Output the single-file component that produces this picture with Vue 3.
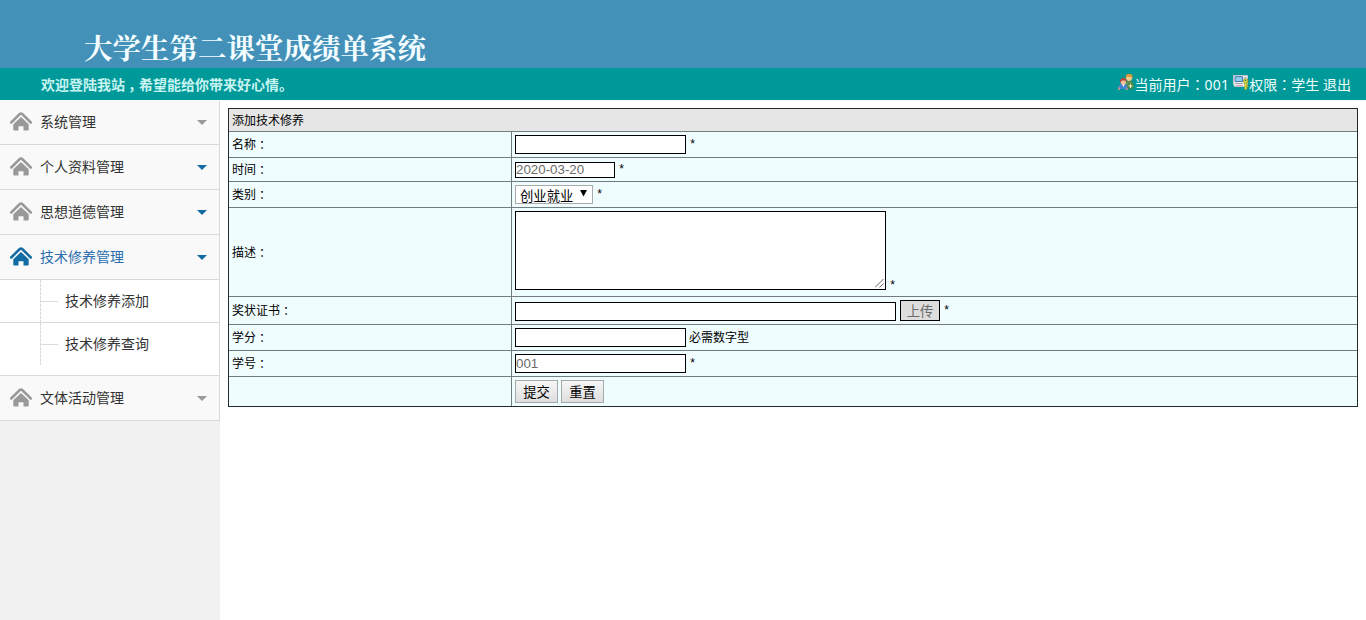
<script setup>
import { ref } from 'vue'

const menus = [
  { name: '系统管理', state: 'idle' },
  { name: '个人资料管理', state: 'ready' },
  { name: '思想道德管理', state: 'ready' },
  { name: '技术修养管理', state: 'active', children: ['技术修养添加', '技术修养查询'] },
  { name: '文体活动管理', state: 'idle' },
]
const category = ref('创业就业')
</script>

<template>
  <div class="page">
    <header class="banner"><h1>大学生第二课堂成绩单系统</h1></header>
    <div class="bar">
      <span class="welcome">欢迎登陆我站<span class="comma">，</span>希望能给你带来好心情。</span>
      <div class="user">
        <svg class="people" width="16" height="17" viewBox="0 0 16 17">
          <path d="M7 14V10q0-3 3-3h2q3 0 3 3v4z" fill="#5d9a55" stroke="#3d7144" stroke-width=".6" />
          <circle cx="11" cy="4" r="3" fill="#f6cc91" />
          <path d="M7.800 4.500V1.500L9.500 0h3.500l1.500 1.500v3L13 3H9z" fill="#e09a3c" />
          <path d="M0 15q0-5 4-5h2q4 0 4 5z" fill="#4383d1" />
          <path d="M4 10l1.300 3L7 10z" fill="#fff" />
          <circle cx="5.300" cy="8" r="2.700" fill="#f6c09b" />
          <path d="M2 9V6.500q1.500-3.500 4-2.500 3 0 2.500 4L7 6.500H4z" fill="#b3483a" />
          <path d="M0 16l1-4 1 4zM8 16l.5-3 1.500 3z" fill="#e0a070" />
          <circle cx="12.500" cy="12" r="3" fill="#52863f" />
          <path d="M12.500 10v4M10.500 12h4" stroke="#e8f5d6" />
        </svg>
        <span class="txt">当前用户<span class="mid">：</span><span class="num">001</span></span>
        <svg class="device" width="16" height="16" viewBox="0 0 16 16">
          <path d="M.5 1.500h14v8l-1 3h-12l-1-3z" fill="#eeeef2" stroke="#c2c7cf" />
          <path d="M2 2.700h7.500v4.800H2z" fill="#8ccdf0" stroke="#427fae" />
          <path d="M11 3.500h2M11 5.500h2M2 9.500h8" stroke="#a0a8b2" />
          <path d="M3 11.500h7" stroke="#d6a9b4" stroke-width="1.200" />
          <circle cx="12.700" cy="7" r="2.300" fill="#f0e248" stroke="#7d8f27" stroke-width=".8" />
          <path d="M11.700 9h2v6.500h-2zM13.700 11H15v2h-1.300z" fill="#f0e63e" stroke="#8b9a31" stroke-width=".6" />
          <circle cx="12.700" cy="6.500" r=".8" fill="#317253" />
        </svg>
        <span class="txt">权限<span class="mid">：</span>学生 退出</span>
      </div>
    </div>
    <div class="body">
      <nav class="side">
        <template v-for="m in menus" :key="m.name">
          <div class="item" :class="m.state">
            <svg class="home" width="22" height="19" viewBox="0 0 22 19">
              <path d="M1.200 10.500L9.800 2q1.200-1 2.400 0l8.600 8.500" fill="none" stroke="currentColor" stroke-width="2.500" stroke-linecap="round" />
              <path d="M3.300 12.200L11 5l7.700 7.200v5.300q0 1-1 1h-4.200v-4.200h-5v4.200H4.300q-1 0-1-1z" fill="currentColor" />
            </svg>
            <span class="label">{{ m.name }}</span>
            <i class="caret"></i>
          </div>
          <div v-if="m.children" class="sub">
            <div v-for="c in m.children" :key="c" class="leaf"><i class="branch"></i>{{ c }}</div>
          </div>
        </template>
      </nav>
      <main class="main">
        <div class="form">
          <div class="row title">添加技术修养</div>
          <div class="row r-name">
            <div class="key">名称<span class="mid">：</span></div>
            <div class="val"><input class="field" type="text"><span class="star">*</span></div>
          </div>
          <div class="row r-date">
            <div class="key">时间<span class="mid">：</span></div>
            <div class="val"><input class="field date" type="text" value="2020-03-20"><span class="star">*</span></div>
          </div>
          <div class="row r-type">
            <div class="key">类别<span class="mid">：</span></div>
            <div class="val">
              <div class="select"><span>{{ category }}</span><svg width="7" height="7" viewBox="0 0 7 7"><path d="M0 0h7L3.500 6.500z" /></svg></div>
              <span class="star">*</span>
            </div>
          </div>
          <div class="row r-desc">
            <div class="key">描述<span class="mid">：</span></div>
            <div class="val">
              <div class="area">
                <textarea></textarea>
                <svg class="grip" width="9" height="9" viewBox="0 0 9 9"><path d="M0 8.500L8.500 0M4.500 8.500L8.500 4.500" stroke="#666" fill="none" /></svg>
              </div>
              <span class="star low">*</span>
            </div>
          </div>
          <div class="row r-cert">
            <div class="key">奖状证书<span class="mid">：</span></div>
            <div class="val"><input class="field wide" type="text"><button class="upload">上传</button><span class="star">*</span></div>
          </div>
          <div class="row r-score">
            <div class="key">学分<span class="mid">：</span></div>
            <div class="val"><input class="field" type="text"><span class="hint">必需数字型</span></div>
          </div>
          <div class="row r-no">
            <div class="key">学号<span class="mid">：</span></div>
            <div class="val"><input class="field" type="text" value="001"><span class="star">*</span></div>
          </div>
          <div class="row r-act">
            <div class="key"></div>
            <div class="val"><button class="btn">提交</button><button class="btn">重置</button></div>
          </div>
        </div>
      </main>
    </div>
  </div>
</template>

<style>
body { margin: 0; background: #fff; overflow: hidden; }
</style>

<style scoped>
.page { height: 620px; display: flex; flex-direction: column; font-family: "Noto Sans", "Noto Sans CJK SC", sans-serif; color: #000; }
.page * { box-sizing: border-box; }
.mid { font-family: "Noto Sans CJK TC", sans-serif; }
.comma { padding-left: 3px; letter-spacing: -3px; }
.banner { height: 68px; flex: none; background: #4391b9; }
.banner h1 { margin: 0; padding: 32px 0 0 84px; height: 68px; font: 700 28.5px/36px "Liberation Serif", "Noto Serif CJK SC", "Noto Sans CJK SC", serif; color: #f4fdff; white-space: nowrap; }
.bar { height: 32px; flex: none; background: #009999; display: flex; justify-content: space-between; padding: 0 15px 0 41px; color: #dff; font-size: 14px; line-height: 32px; white-space: nowrap; }
.welcome { font-weight: 700; font-family: "Noto Sans CJK SC", sans-serif; color: #c8f4f2; }
.user { display: flex; color: #effffd; }
.num { letter-spacing: .3px; }
.people { margin-top: 6px; }
.device { margin: 6px 0 0 4px; }
.body { flex: 1; display: flex; min-height: 0; border-top: 1px solid #effdff; }
.side { width: 220px; flex: none; background: #f1f1f1; }
.item { height: 45px; display: flex; align-items: center; padding: 0 12px 0 10px; background: #f9f9f9; border-right: 1px solid #d9d9d9; border-bottom: 1px solid #d9d9d9; font-size: 14px; line-height: 20px; color: #333; }
.item:first-child { height: 44px; padding-bottom: 1px; }
.home { color: #999; margin-top: -2px; }
.label { margin-left: 8px; flex: 1; }
.caret { border: 5px solid transparent; border-top-color: #999; border-bottom: 0; margin-top: 1px; }
.ready .caret, .active .caret { border-top-color: #126ba3; }
.active .home { color: #126ba3; }
.active .label { color: #2a6eaf; }
.sub { height: 96px; background: #fff; border-right: 1px solid #d9d9d9; border-bottom: 1px solid #d9d9d9; }
.leaf { height: 43px; display: flex; align-items: center; font-size: 14px; color: #333; line-height: 42px; border-bottom: 1px solid #d9d9d9; }
.leaf:last-child { border-bottom-color: transparent; }
.leaf::before { content: ""; width: 1px; height: 42px; margin-left: 40px; background: repeating-linear-gradient(#d8d8d8 0 3px, #f4f4f4 3px 4px); }
.branch { width: 17px; border-top: 1px solid #dcdcdc; margin-right: 7px; }
.main { flex: 1; padding: 7px 8px 0; }
.form { border: 1px solid #222b2b; background: #f0fdff; font-size: 12px; line-height: 18px; }
.row { display: flex; border-bottom: 1px solid #727d80; }
.row:last-child { border-bottom: 0; }
.title { height: 23px; background: #e6e6e6; padding: 3px 0 0 3px; }
.key { width: 283px; flex: none; border-right: 1px solid #727d80; padding-left: 3px; display: flex; align-items: center; }
.val { display: flex; align-items: center; padding-left: 3px; }
.r-name { height: 26px; }
.r-date { height: 24px; }
.r-type { height: 26px; }
.r-desc { height: 89px; }
.r-desc .key { padding-top: 2px; }
.r-cert { height: 28px; }
.r-score, .r-no { height: 26px; }
.r-act { height: 29px; }
.field { width: 171px; height: 19px; margin: 0; padding: 0; border: 1px solid #000; background: #fff; color: #6b6b6b; font: 13.33px/15px "Liberation Sans", sans-serif; outline: 0; border-radius: 0; }
.date { width: 100px; height: 16px; padding-bottom: 2px; }
.r-date .field { margin-top: 1px; }
.wide { width: 381px; margin-top: 2px; }
.star { margin-left: 3px; font: 12px/18px "Liberation Mono", monospace; }
.hint { margin-left: 3px; }
.select { width: 78px; height: 19px; display: flex; align-items: center; justify-content: space-between; background: #fff; border: 1px solid #a9a9a9; padding: 0 5px 0 4px; font-size: 13.33px; line-height: 17px; }
.select span { padding-top: 3px; }
.select svg { margin-bottom: 2px; }
.area { position: relative; width: 371px; height: 79px; margin-bottom: 3px; }
.area textarea { display: block; width: 371px; height: 79px; margin: 0; padding: 2px; border: 1px solid #000; background: #fff; resize: none; border-radius: 0; }
.grip { position: absolute; right: 2px; bottom: 2px; }
.low { align-self: flex-end; margin-bottom: 1px; }
.upload { width: 40px; height: 21px; margin: 0 0 0 4px; padding: 0; border: 1px solid #000; background: #ddd; color: #6b6b6b; font: 13.33px/19px "Noto Sans CJK SC", sans-serif; border-radius: 0; }
.btn { width: 43px; height: 23px; margin: 0 3px 0 0; padding: 0; border: 1px solid #a5a9a9; background: linear-gradient(#f6f6f6, #dedede); color: #000; font: 13.33px/20px "Noto Sans CJK SC", sans-serif; border-radius: 0; }
</style>
